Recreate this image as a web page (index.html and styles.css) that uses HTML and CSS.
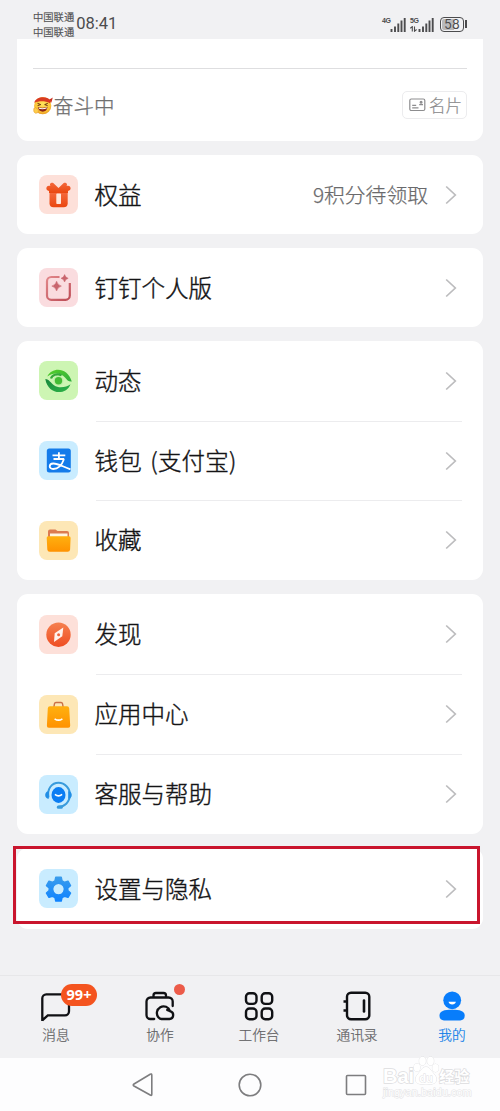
FILE: index.html
```html
<!DOCTYPE html>
<html lang="zh-CN">
<head>
<meta charset="utf-8">
<meta name="viewport" content="width=device-width, initial-scale=1">
<title>我的</title>
<link rel="stylesheet" href="styles.css">
</head>
<body>
<svg class="defs" width="0" height="0" aria-hidden="true">
  <defs>
    <linearGradient id="g-gift" x1="0" y1="0" x2="0" y2="1"><stop offset="0" stop-color="#f4683c"/><stop offset="1" stop-color="#ea4710"/></linearGradient>
    <linearGradient id="g-rose" gradientUnits="userSpaceOnUse" x1="8" y1="8" x2="31" y2="32"><stop offset="0" stop-color="#e2888b"/><stop offset="1" stop-color="#bd4c56"/></linearGradient>
    <linearGradient id="g-green" x1="0" y1="0" x2="1" y2="1"><stop offset="0" stop-color="#55cf28"/><stop offset="1" stop-color="#2fae3e"/></linearGradient>
    <linearGradient id="g-green2" x1="0" y1="0" x2="1" y2="1"><stop offset="0" stop-color="#16883c"/><stop offset="1" stop-color="#2fb548"/></linearGradient>
    <linearGradient id="g-orange" x1="0" y1="0" x2="0" y2="1"><stop offset="0" stop-color="#ffb010"/><stop offset="1" stop-color="#ff9200"/></linearGradient>
    <linearGradient id="g-compass" x1="0" y1="0" x2="0" y2="1"><stop offset="0" stop-color="#f5804f"/><stop offset="1" stop-color="#ef4d22"/></linearGradient>
    <linearGradient id="g-gear" x1="0" y1="0" x2="0" y2="1"><stop offset="0" stop-color="#3a9cec"/><stop offset="1" stop-color="#0f83ff"/></linearGradient>
    <radialGradient id="g-face" cx=".5" cy=".4" r=".65"><stop offset="0" stop-color="#ffe45c"/><stop offset=".7" stop-color="#fbc235"/><stop offset="1" stop-color="#e08a1c"/></radialGradient>
    <symbol id="chevron" viewBox="0 0 12 20"><path d="M1.2 1.5 10.3 10 1.2 18.5" fill="none" stroke="#bcbcbe" stroke-width="1.7"/></symbol>
  </defs>
</svg>
<div class="screen">
  <header class="status">
    <div class="carriers"><span>中国联通</span><span>中国联通</span></div>
    <time class="clock">08:41</time>
    <div class="indicators">
      <div class="signal">
        <div class="net"><b>4G</b></div>
        <svg width="16" height="15" viewBox="0 0 16 15"><path d="M1.5 12v3M5 9.5v5.5M8.3 6.5v8.5M11.5 3.5v11.5M14.7 1v14" stroke="#4c4c4e" stroke-width="1.9"/></svg>
      </div>
      <div class="signal">
        <div class="net"><b>5G</b><svg width="7" height="6" viewBox="0 0 7 6"><path d="M.3 2.3 2.3.6V5.5M4.5.4V5.2L6.6 3.5" fill="none" stroke="#4c4c4e" stroke-width="1.1"/></svg></div>
        <svg width="16" height="15" viewBox="0 0 16 15"><path d="M1.5 12v3M5 9.5v5.5M8.3 6.5v8.5M11.5 3.5v11.5M14.7 1v14" stroke="#4c4c4e" stroke-width="1.9"/></svg>
      </div>
      <div class="battery">58</div>
    </div>
  </header>

  <main class="content">
    <section class="card profile">
      <div class="mood">
        <svg width="20" height="19" viewBox="0 0 20 19">
          <circle cx="9.7" cy="9.7" r="8.6" fill="url(#g-face)"/>
          <path d="M1.2 6.8C3 0 15.5-.5 18 5.5L17 7.2C12 4.6 6 4.8 1.2 6.8Z" fill="#d93a22"/>
          <path d="M16.5 3.5 19.8 1.5 18.3 6.8Z" fill="#c92d1c"/>
          <path d="M4.5 7.3 7.7 8.6 4.6 9.6M14.8 7.3 11.7 8.6 14.6 9.6" fill="none" stroke="#69320e" stroke-width="1"/>
          <path d="M4.8 11Q9.8 12.6 14.6 10.7 13.8 15.5 9.8 15.7 5.7 15.5 4.8 11Z" fill="#8d2516"/>
          <path d="M5.6 11.5Q9.8 12.9 13.9 11.2L13.5 12.6Q9.8 13.7 6 12.8Z" fill="#fff"/>
          <path d="M.8 12.5q2-1.8 3.3.3 1.7.2 1.3 2.2-.3 2.6-2.8 2.3Q0 16.5.8 12.5Z" fill="#ffcd4b" stroke="#dc932b" stroke-width=".5"/>
        </svg>
        <span>奋斗中</span>
      </div>
      <div class="namecard">
        <svg width="17" height="14" viewBox="0 0 17 14" fill="none" stroke="#8d8d8f" stroke-width="1.2"><rect x=".8" y="1" width="15" height="11.5" rx="1.5"/><path d="M3.2 7.3h4M3.2 9.8h6.3M10.2 6.6h3.8"/><circle cx="12.1" cy="4.2" r=".9" fill="#8d8d8f"/></svg>
        <span>名片</span>
      </div>
    </section>

    <section class="card">
      <div class="row">
        <svg class="icon peach" viewBox="0 0 39 39">
          <path d="M10 15c-3.5-.4-3.5-5 0-5.2h1.5C9.6 7.3 13.5 5.2 15.3 7.9L19.5 12l4.2-4.1c1.8-2.7 5.7-.6 3.8 1.9H29c3.5.2 3.5 4.8 0 5.2v2H10Z" transform="translate(0 1)" fill="url(#g-gift)"/>
          <path d="M10.5 18h18.2v10.2a4 4 0 0 1-4 4H14.5a4 4 0 0 1-4-4Z" fill="url(#g-gift)"/>
          <rect x="17.3" y="18.6" width="4.7" height="10.4" rx=".8" fill="#ffe7dc"/>
        </svg>
        <span class="label">权益</span><span class="note">9积分待领取</span>
        <svg class="chevron"><use href="#chevron"/></svg>
      </div>
    </section>

    <section class="card">
      <div class="row">
        <svg class="icon pink" viewBox="0 0 39 39">
          <path d="M20.5 9H12.3A4.3 4.3 0 0 0 8 13.3V27.5A4.3 4.3 0 0 0 12.3 31.8H26.5A4.3 4.3 0 0 0 30.8 27.5V15" fill="none" stroke="url(#g-rose)" stroke-width="2.2"/>
          <path d="M17.6 13.2Q18.6 17 22.4 18.1 18.6 19.2 17.6 23 16.6 19.2 12.8 18.1 16.6 17 17.6 13.2ZM25.6 6.6Q26.3 9.6 29.2 10.3 26.3 11 25.6 14 24.9 11 22 10.3 24.9 9.6 25.6 6.6Z" fill="#c9656d" stroke="#c9656d" stroke-width=".5"/>
        </svg>
        <span class="label">钉钉个人版</span>
        <svg class="chevron"><use href="#chevron"/></svg>
      </div>
    </section>

    <section class="card services">
      <div class="row">
        <svg class="icon lime" viewBox="0 0 39 39">
          <path d="M8.3 15.5C13.5 5.500 28.5 6.500 32.8 20.500 29.5 20.800 28 19 26 16.500 21.500 11.500 14 11.500 8.300 15.500Z" fill="url(#g-green)"/>
          <path d="M6.300 18C9 34.500 27.500 34.500 31.500 23.200 27.500 26.200 20 27.800 15 24.300 11.500 21.800 10.500 18.500 6.300 18Z" fill="url(#g-green2)"/>
          <path d="M12 17.500C13 14 18 12 22.500 14.500" fill="none" stroke="#35a83a" stroke-width="2.200"/>
          <circle cx="19.500" cy="19.700" r="5" fill="#bdeea6"/><circle cx="19.500" cy="19.700" r="3.700" fill="#43bd35"/>
        </svg>
        <span class="label">动态</span>
        <svg class="chevron"><use href="#chevron"/></svg>
      </div>
      <div class="row">
        <svg class="icon sky" viewBox="0 0 39 39">
          <rect x="7.8" y="7.5" width="24" height="24" rx="2.5" fill="#147bea"/>
          <path d="M13.5 14.3h12.8M14.5 18h10.7M19.9 11.3V18M25 18C22.8 24.3 18.7 28 14.2 28 9.5 28 9.6 22.8 14.2 22.5 18.5 22.3 23 25.3 31.5 28.3" fill="none" stroke="#fff" stroke-width="1.8"/>
        </svg>
        <span class="label wallet">钱包 (支付宝)</span>
        <svg class="chevron"><use href="#chevron"/></svg>
      </div>
      <div class="row">
        <svg class="icon sand" viewBox="0 0 39 39">
          <path d="M9 17V10.5a2 2 0 0 1 2-2h5.5l2 1.5h9.5a2 2 0 0 1 2 2V17Z" fill="#dc7b50"/>
          <rect x="11" y="12.5" width="17.5" height="4" fill="#fff5df"/>
          <path d="M9.3 15.3H29.9a1.7 1.7 0 0 1 1.7 1.8L31.1 28.5a2.5 2.5 0 0 1-2.5 2.3H10.8a2.5 2.5 0 0 1-2.5-2.3L7.7 17.1a1.6 1.6 0 0 1 1.6-1.8Z" fill="url(#g-orange)"/>
        </svg>
        <span class="label">收藏</span>
        <svg class="chevron"><use href="#chevron"/></svg>
      </div>
    </section>

    <section class="card tools">
      <div class="row">
        <svg class="icon peach" viewBox="0 0 39 39">
          <circle cx="19.5" cy="19.7" r="12.2" fill="url(#g-compass)"/>
          <path d="M24.3 12.5 15.7 18.2 15 27 23.3 21.3Z" fill="#fff2ec"/><circle cx="19.6" cy="19.7" r="1.5" fill="#ee653e"/>
        </svg>
        <span class="label">发现</span>
        <svg class="chevron"><use href="#chevron"/></svg>
      </div>
      <div class="row">
        <svg class="icon sand" viewBox="0 0 39 39">
          <path d="M14.8 12.5 15.5 8.7a1.5 1.5 0 0 1 1.5-1.2h5a1.5 1.5 0 0 1 1.5 1.2l.7 3.8" fill="none" stroke="#cb7148" stroke-width="1.4"/>
          <path d="M11 11.3H28a2.2 2.2 0 0 1 2.2 2L31.2 30.5a2 2 0 0 1-2 2.2H9.900a2 2 0 0 1-2-2.2L8.800 13.3a2.2 2.2 0 0 1 2.200-2Z" fill="url(#g-orange)"/>
          <path d="M15.6 23.8q3.9 2.7 7.8 0" fill="none" stroke="#fff" stroke-width="1.6"/>
        </svg>
        <span class="label">应用中心</span>
        <svg class="chevron"><use href="#chevron"/></svg>
      </div>
      <div class="row">
        <svg class="icon sky" viewBox="0 0 39 39">
          <path d="M9.5 22.5C7.8 13.5 13 7.8 19.5 7.8S31.2 13.5 30.9 20C30.7 27 25.5 32.2 18.5 32" fill="none" stroke="#399bdc" stroke-width="2"/>
          <path d="M9.8 16.3v7.5C5 24 5 16 9.8 16.3ZM29.2 16.3v7.5C34 24 34 16 29.2 16.3Z" fill="#218ee6"/>
          <rect x="17.8" y="30.5" width="6" height="3.2" rx="1.5" fill="#399bdc"/>
          <ellipse cx="19.5" cy="20" rx="7" ry="7.9" fill="#0a7df3"/>
          <path d="M15.9 19.3q3.6 3 7.2 0" fill="none" stroke="#fff" stroke-width="1.7"/>
        </svg>
        <span class="label">客服与帮助</span>
        <svg class="chevron"><use href="#chevron"/></svg>
      </div>
    </section>

    <section class="card settings">
      <div class="row">
        <svg class="icon sky" viewBox="0 0 39 39">
          <path fill-rule="evenodd" fill="url(#g-gear)" stroke="url(#g-gear)" stroke-width="1.5" stroke-linejoin="round" d="M16.8 8.2H22.2L23 11.8 25.7 13.3 29 12.2 31.5 16.7 28.8 19V21.5L31.5 24 29 28.3 25.7 27.2 23 28.7 22.2 32H16.8L16 28.7 13.3 27.2 10 28.3 7.5 24 10.2 21.5V19L7.5 16.7 10 12.2 13.3 13.3 16 11.8ZM19.5 14.2a5.9 5.9 0 1 0 .01 0Z"/>
        </svg>
        <span class="label">设置与隐私</span>
        <svg class="chevron"><use href="#chevron"/></svg>
      </div>
      <div class="highlight"></div>
    </section>
  </main>

  <nav class="tabs">
    <a class="tab">
      <svg width="34" height="34" viewBox="0 0 34 34"><path d="M3.3 31V8.3a4 4 0 0 1 4-4H26a4 4 0 0 1 4 4V21.3a4 4 0 0 1-4 4H8.8L3.3 30.3" fill="none" stroke="#101114" stroke-width="2.3"/></svg>
      <span>消息</span><i class="badge">99+</i>
    </a>
    <a class="tab">
      <svg width="34" height="34" viewBox="0 0 34 34" fill="none" stroke="#101114" stroke-width="2.3" stroke-linecap="round"><path d="M11.2 29H7.5a4 4 0 0 1-4-4V11.5a4 4 0 0 1 4-4H25.7a4 4 0 0 1 4 4V16M10.5 7V5.5A2.5 2.5 0 0 1 13 3h7.5A2.5 2.5 0 0 1 23 5.5V7"/><path d="M18.4 29H26.5A4 4 0 0 0 27 21.1 6.7 6.7 0 1 0 15.6 27.5Q17 29 18.4 29M24.2 20q1.4.1 2.5 1"/></svg>
      <span>协作</span><i class="dot"></i>
    </a>
    <a class="tab">
      <svg width="34" height="34" viewBox="0 0 34 34" fill="none" stroke="#101114" stroke-width="2.4"><rect x="4" y="3.2" width="10.5" height="10.7" rx="3.5"/><rect x="19.7" y="3.2" width="10.5" height="10.7" rx="3.5"/><rect x="4" y="18.5" width="10.5" height="10.7" rx="3.5"/><rect x="19.7" y="18.5" width="10.5" height="10.7" rx="3.5"/></svg>
      <span>工作台</span>
    </a>
    <a class="tab">
      <svg width="34" height="34" viewBox="0 0 34 34" fill="none" stroke="#101114" stroke-width="2.4"><rect x="7" y="2.7" width="22.3" height="26.6" rx="4"/><path d="M24 10.5V21.5" stroke-width="2.6" stroke-linecap="round"/><path d="M3.5 11.5h4M3.5 20.5h4"/></svg>
      <span>通讯录</span>
    </a>
    <a class="tab active">
      <svg width="34" height="34" viewBox="0 0 34 34" fill="#087dfb"><circle cx="17.2" cy="10.3" r="8.9"/><path d="M4.5 25.6C4.5 21 9 19.8 17 19.8S29.7 21 29.7 25.6c0 3.2-1.7 4.8-4.5 4.8H9c-2.8 0-4.5-1.6-4.5-4.8Z"/><path d="M13.5 11.7h7.4q-.7 2.7-3.7 2.7t-3.7-2.7Z" fill="#fff"/></svg>
      <span>我的</span>
    </a>
  </nav>

  <footer class="system">
    <svg width="22" height="26" viewBox="0 0 22 26"><path d="M2 12 18.2 2.2Q19.8 1.4 19.8 3.2V22.2Q19.8 24 18.2 23L2 14Q.5 13 2 12Z"/></svg>
    <svg width="26" height="26" viewBox="0 0 26 26"><circle cx="13" cy="13" r="10.8"/></svg>
    <svg width="22" height="22" viewBox="0 0 22 22"><rect x="1.5" y="1.5" width="19" height="19" rx="1"/></svg>
    <div class="watermark">
      <div class="brand"><span>Bai</span>
        <svg class="paw" width="26" height="30" viewBox="0 0 26 30"><ellipse cx="4" cy="11.5" rx="3.2" ry="4"/><ellipse cx="9.5" cy="5" rx="3.3" ry="4.2"/><ellipse cx="17.5" cy="5" rx="3.3" ry="4.2"/><ellipse cx="22.5" cy="12" rx="3.2" ry="4"/><path d="M13 11c4 0 5 4 8 7s4 9-2 10c-4 .5-8 .5-12 0-6-1-5-7-2-10s4-7 8-7Z"/><text x="13" y="25.5" text-anchor="middle">du</text></svg>
        <span class="cn">经验</span></div>
      <div class="site">jingyan.baidu.com</div>
    </div>
  </footer>
</div>
</body>
</html>
```
FILE: styles.css
```css
* { box-sizing: border-box; }
body {
  margin: 0;
  background: #f1f1f3;
  color: #141416;
  font-family: "Noto Sans CJK SC", sans-serif;
  font-weight: 300;
}
svg { display: block; flex: none; }
.defs { position: absolute; }
.screen { width: 500px; height: 1111px; display: flex; flex-direction: column; overflow: hidden; }

.status { height: 39px; display: flex; align-items: center; padding: 9px 33px 0; color: #4c4c4e; }
.carriers { display: flex; flex-direction: column; font-size: 10.3px; line-height: 15px; -webkit-text-stroke: 0.25px; }
.clock { margin-left: 2px; font: 16.5px/20px Roboto, sans-serif; width: 42px; }
.indicators { margin-left: auto; display: flex; align-items: center; }
.signal { display: flex; align-items: flex-end; margin-right: 4px; height: 15px; }
.net { width: 8px; height: 15px; display: flex; flex-direction: column; justify-content: space-between; }
.net b { font: 700 7px/7px "Liberation Sans", sans-serif; letter-spacing: -0.5px; }
.battery {
  position: relative;
  width: 24px; height: 15px; margin: 0 3px 0 2px;
  border: 1.5px solid #4c4c4e; border-radius: 4px;
  background: linear-gradient(90deg, #b9b9bb 58%, transparent 58%) content-box;
  padding: 1px;
  font: 12.5px/11px Inter, sans-serif; text-align: center;
}
.battery::after { content: ""; position: absolute; right: -4px; top: 2px; width: 2px; height: 8px; background: #4c4c4e; }

.content { flex: 1; padding: 0 17px; display: flex; flex-direction: column; gap: 14px; }
.card { flex: none; background: #fff; border-radius: 11px; height: 79px; display: flex; flex-direction: column; }
.profile {
  height: 102px; border-radius: 0 0 11px 11px;
  padding: 29px 16px 0;
  display: grid; grid-template-columns: 1fr auto; grid-template-rows: 1px 72px; align-items: center;
}
.profile::before { content: ""; grid-column: 1 / -1; height: 1px; background: #dedee0; }
.mood { display: flex; align-items: center; height: 72px; color: #707070; font-size: 20.5px; -webkit-text-stroke: 0.3px; }
.mood span, .namecard span { margin-top: -1px; }
.namecard {
  display: flex; align-items: center; gap: 3px;
  width: 65px; height: 28px; padding-left: 6px;
  border: 1px solid #ececee; border-radius: 5px;
  color: #8c8c8e; font-size: 16.5px; white-space: nowrap; -webkit-text-stroke: 0.2px;
}
.services { height: 239px; }
.tools { height: 240px; }
.settings { position: relative; height: 81px; }
.row { flex: 1; display: flex; align-items: center; position: relative; padding: 0 26px 0 22px; }
.row + .row::before { content: ""; position: absolute; left: 79px; right: 21px; top: 0; height: 1px; background: #ececee; }
.icon { width: 39px; height: 39px; border-radius: 8px; margin-right: 16.5px; }
.peach { background: #fde0d9; }
.pink { background: #fadcdf; }
.lime { background: #cdf5b3; }
.sky { background: #c9ecff; }
.sand { background: #fde7b6; }
.label { flex: 1; margin-top: -2px; font-size: 23.5px; line-height: 32px; white-space: nowrap; -webkit-text-stroke: 0.4px; }
.wallet { word-spacing: 3px; letter-spacing: 0.2px; }
.note { margin: -1px 17px 0 0; font-size: 20.8px; color: #6a6a6c; white-space: nowrap; -webkit-text-stroke: 0.25px; }
.chevron { width: 12px; height: 20px; }
.highlight { position: absolute; left: -4px; top: -2px; width: 467px; height: 78px; border: 3px solid #c9152d; }

.tabs { height: 83px; border-top: 1px solid #e7e7e9; display: grid; grid-template-columns: 108px 100px 98px 98px 92px; padding-left: 2px; }
.tab { position: relative; padding-top: 14px; display: flex; flex-direction: column; align-items: center; font-size: 13.7px; line-height: 20px; color: #606062; -webkit-text-stroke: 0.2px; }
.active { color: #087be8; }
.badge {
  position: absolute; left: 59px; top: 8px; width: 36px; height: 22px; border-radius: 11px;
  background: #f4541f; color: #fff; font: 700 14.5px/21px "Noto Sans", sans-serif; text-align: center; -webkit-text-stroke: 0;
}
.dot { position: absolute; left: 64px; top: 8px; width: 11px; height: 11px; border-radius: 50%; background: #ec5b49; }

.system { position: relative; height: 53px; background: #fdfdfe; display: flex; align-items: center; padding: 0 133px 0 132px; justify-content: space-between; }
.system > svg { fill: none; stroke: #7d7d7f; stroke-width: 1.6; }
.watermark { position: absolute; left: 383px; top: -2px; width: 92px; color: #fff; font-family: "Liberation Sans", sans-serif; paint-order: stroke; }
.brand { display: flex; align-items: flex-end; height: 30px; font-size: 20px; line-height: 20px; font-weight: 700; -webkit-text-stroke: 1.4px #dcdcde; }
.cn { font: 700 15px/20px "Noto Sans CJK SC", sans-serif; }
.paw { fill: #fff; stroke: #dcdcde; stroke-width: 0.8; margin-left: -1px; }
.paw text { font: 700 11px "Liberation Sans", sans-serif; }
.site { font-size: 11px; line-height: 13px; -webkit-text-stroke: 1px #e2e2e4; white-space: nowrap; }
```
